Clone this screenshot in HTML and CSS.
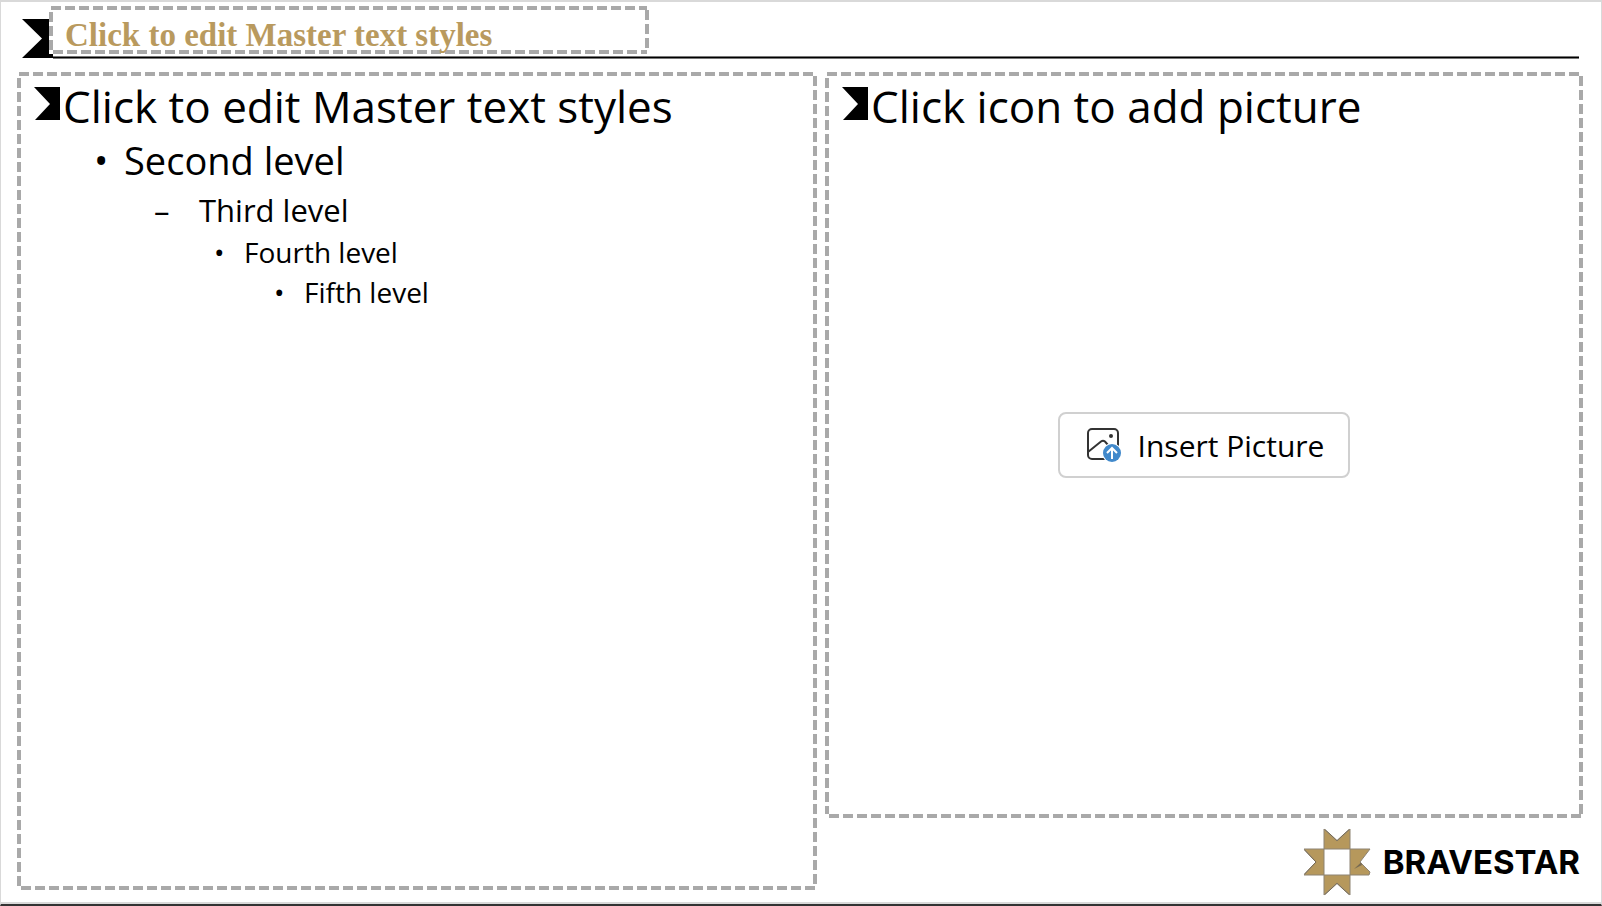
FILE: index.html
```
<!DOCTYPE html>
<html lang="en">
<head>
    <meta charset="UTF-8">
    <meta name="viewport" content="width=device-width, initial-scale=1.0">
    <title>Bravestar Slide Master</title>
    <link rel="stylesheet" href="styles.css">
</head>
<body>
    <div class="slide">
        <header class="header">
            <svg class="header-flag" viewBox="0 0 31 39" aria-hidden="true">
                <path d="M0 0H31V39H0L20 19.5Z"/>
            </svg>
            <div class="header-bar">
                <h1 class="title placeholder">Click to edit Master text styles</h1>
            </div>
        </header>

        <main class="content">
            <section class="text-box placeholder">
                <h2 class="level-1">
                    <svg class="flag" viewBox="0 0 26 33" aria-hidden="true">
                        <path d="M0 0H26V33H1L16 17Z"/>
                    </svg>
                    Click to edit Master text styles
                </h2>
                <ul class="levels">
                    <li class="level-2">Second level</li>
                    <li class="level-3">Third level</li>
                    <li class="level-4">Fourth level</li>
                    <li class="level-5">Fifth level</li>
                </ul>
            </section>

            <div class="side">
                <section class="picture-box placeholder">
                    <h2 class="level-1">
                        <svg class="flag" viewBox="0 0 26 33" aria-hidden="true">
                            <path d="M0 0H26V33H1L16 17Z"/>
                        </svg>
                        Click icon to add picture
                    </h2>
                    <div class="picture-area">
                        <button type="button" class="insert-button">
                            <svg class="insert-icon" viewBox="0 0 36 36" aria-hidden="true">
                                <rect x="2" y="2" width="30" height="30" rx="4" fill="none" stroke="#333" stroke-width="2"/>
                                <path d="M2 25L15 14.500Q17 13 19 14.500L22 18" fill="none" stroke="#333" stroke-width="2"/>
                                <circle cx="25" cy="9" r="2" fill="#333"/>
                                <circle cx="26" cy="26" r="10" fill="#fff"/>
                                <circle cx="26" cy="26" r="9" fill="#4189cb"/>
                                <path d="M26 32V21M21 26L26 21L31 26" fill="none" stroke="#fff" stroke-width="2"/>
                            </svg>
                            Insert Picture
                        </button>
                    </div>
                </section>

                <footer class="brand">
                    <svg class="brand-star" viewBox="0 0 68 68" aria-hidden="true">
                        <g fill="#b6985c" stroke="#8d8373" stroke-width="1">
                            <path d="M21 21V1L34 13L47 1V21Z"/>
                            <path d="M47 21H67L57 34L67 44L66 47H47Z"/>
                            <path d="M47 47V67L34 55L21 67V47Z"/>
                            <path d="M21 47H1L13 34L1 21H21Z"/>
                        </g>
                        <path d="M22 1.500L34 12.500L46 1.500M22 66.500L34 55.500L46 66.500M1.500 22L13 34L1.500 46" fill="none" stroke="#776a52" stroke-width="1"/>
                        <path d="M51 41L58 34.500L59 37Z" fill="#776a52"/>
                    </svg>
                    <span class="brand-name">BRAVESTAR</span>
                </footer>
            </div>
        </main>
    </div>
</body>
</html>
```
FILE: styles.css
```
* {
    box-sizing: border-box;
}
body {
    margin: 0;
    background: #fff;
    color: #000;
    font-family: "Open Sans", "Noto Sans", sans-serif;
}
h1, h2, ul {
    margin: 0;
    padding: 0;
    font-weight: normal;
}
.slide {
    display: flex;
    flex-direction: column;
    min-height: 100vh;
    padding: 4px 18px 14px 16px;
    border: 1px solid #d9d9d9;
    border-top-width: 2px;
    border-bottom: 2px solid #333;
    box-shadow: inset 0 -2px #d9d9d9;
}

/* dashed frame, 10px dash and 4px gap */
.placeholder {
    --dash: #a9a9a9 0 10px, transparent 10px 14px;
    background:
        repeating-linear-gradient(90deg, var(--dash)) 2px 0 / calc(100% - 4px) 4px no-repeat,
        repeating-linear-gradient(180deg, var(--dash)) 100% 4px / 4px calc(100% - 8px) no-repeat,
        repeating-linear-gradient(90deg, var(--dash)) 4px 100% / calc(100% - 6px) 4px no-repeat,
        repeating-linear-gradient(180deg, var(--dash)) 0 6px / 4px calc(100% - 10px) no-repeat,
        #fff;
}

.header {
    display: flex;
    align-items: flex-end;
    padding: 0 4px 0 5px;
}
.header-flag {
    width: 31px;
    height: 39px;
    margin-bottom: 1px;
    flex: none;
}
.header-bar {
    flex: 1;
    margin-left: -4px;
    padding-bottom: 5px;
    background: linear-gradient(#777 1px, #000 1px 2px, #777 2px) 4px 100% / 100% 3px no-repeat;
}
.title {
    width: 600px;
    max-width: 100%;
    height: 48px;
    padding-left: 16px;
    color: #b99a5e;
    font-family: "Liberation Serif", serif;
    font-size: 33px;
    font-weight: bold;
    line-height: 58px;
}

.content {
    flex: 1;
    display: grid;
    grid-template-columns: 400fr 379fr;
    gap: 8px;
    margin-top: 13px;
}
.text-box, .picture-box {
    padding: 8px 17px;
}
.level-1 {
    display: flex;
    gap: 3px;
    font-size: 44px;
    line-height: 52px;
    white-space: nowrap;
}
.flag {
    width: 26px;
    height: 33px;
    margin-top: 7px;
    flex: none;
}
.levels {
    list-style: none;
}
.levels li {
    display: flex;
}
.levels li::before {
    content: "•";
    flex: none;
    width: 30px;
}
.level-2 {
    padding-left: 60px;
    font-size: 38px;
    line-height: 56px;
}
.levels .level-3 {
    padding-left: 120px;
    font-size: 31px;
    line-height: 44px;
}
.levels .level-3::before {
    content: "–";
    width: 45px;
}
.level-4, .level-5 {
    font-size: 28px;
    line-height: 40px;
}
.level-4 {
    padding-left: 180px;
}
.level-5 {
    padding-left: 240px;
}

.side {
    display: flex;
    flex-direction: column;
}
.picture-box {
    flex: 1;
    display: flex;
    flex-direction: column;
}
.picture-area {
    flex: 1;
    display: flex;
    align-items: center;
    justify-content: center;
    padding-bottom: 52px;
}
.insert-button {
    display: flex;
    align-items: center;
    gap: 16px;
    height: 66px;
    padding: 0 24px 0 26px;
    border: 2px solid #d0d0d0;
    border-radius: 8px;
    background: #fff;
    color: #000;
    font-family: inherit;
    font-size: 30px;
    white-space: nowrap;
}
.insert-icon {
    width: 36px;
    height: 36px;
}
.brand {
    display: flex;
    align-items: center;
    justify-content: flex-end;
    gap: 12px;
    height: 72px;
    padding: 16px 3px 0 0;
}
.brand-star {
    width: 68px;
    height: 68px;
}
.brand-name {
    font-family: Inter, sans-serif;
    font-size: 33px;
    font-weight: bold;
}
```
